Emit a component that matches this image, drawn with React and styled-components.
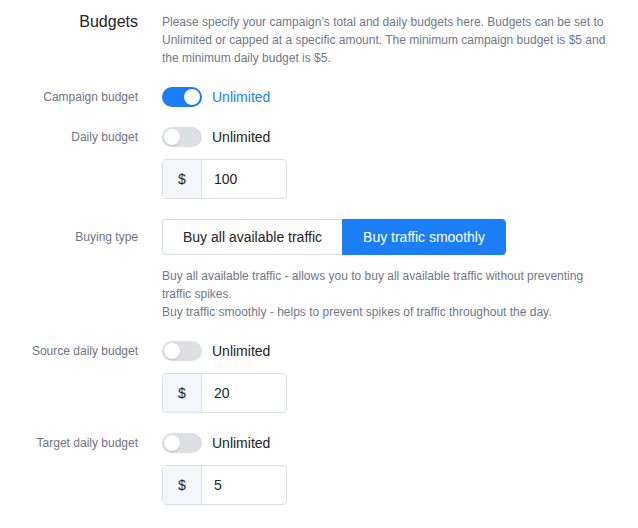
import React from "react";
import styled, { createGlobalStyle } from "styled-components";

const Global = createGlobalStyle`
  html, body { margin: 0; padding: 0; background: #ffffff; }
  body { font-family: "Liberation Sans", Arial, sans-serif; -webkit-font-smoothing: antialiased; }
  * { box-sizing: border-box; }
`;

const BLUE = "#1b7ef5";

const Form = styled.div`
  display: grid;
  grid-template-columns: 138px 1fr;
  column-gap: 24px;
  row-gap: 20px;
  padding: 13px 26px 0 0;
  width: 638px;
`;

const Title = styled.div`
  text-align: right;
  font-size: 16px;
  line-height: 18px;
  color: #222428;
`;

const Label = styled.div`
  text-align: right;
  font-size: 12px;
  color: #6b7489;
  line-height: ${(p) => p.$h || 20}px;
`;

const Description = styled.p`
  margin: 0;
  font-size: 12px;
  line-height: 18px;
  color: #6f778a;
`;

const Help = styled(Description)`
  margin-top: 12px;
`;

const Field = styled.div`
  display: flex;
  flex-direction: column;
  align-items: flex-start;
`;

const ToggleRow = styled.div`
  display: flex;
  align-items: center;
  gap: 10px;
  height: 20px;
`;

const Track = styled.div`
  width: 40px;
  height: 20px;
  border-radius: 10px;
  padding: 2px;
  display: flex;
  justify-content: ${(p) => (p.$on ? "flex-end" : "flex-start")};
  background: ${(p) => (p.$on ? BLUE : "#dcdfe4")};
`;

const Knob = styled.span`
  width: 16px;
  height: 16px;
  border-radius: 50%;
  background: #ffffff;
  box-shadow: 0 1px 2px rgba(0, 0, 0, 0.15);
`;

const ToggleText = styled.span`
  font-size: 14px;
  color: ${(p) => (p.$on ? BLUE : "#222428")};
`;

const InputGroup = styled.div`
  margin-top: 12px;
  display: flex;
  width: 125px;
  height: 40px;
  border: 1px solid #dcdfe5;
  border-radius: 4px;
  overflow: hidden;
`;

const Prefix = styled.div`
  width: 39px;
  display: flex;
  align-items: center;
  justify-content: center;
  background: #f4f6f9;
  border-right: 1px solid #dcdfe5;
  font-size: 14px;
  color: #222428;
`;

const Value = styled.div`
  flex: 1;
  display: flex;
  align-items: center;
  padding-left: 12px;
  font-size: 14px;
  color: #222428;
`;

const Segmented = styled.div`
  display: flex;
  height: 36px;
`;

const Segment = styled.div`
  display: flex;
  align-items: center;
  padding: 0 20px;
  font-size: 14px;
  color: ${(p) => (p.$active ? "#ffffff" : "#222428")};
  background: ${(p) => (p.$active ? BLUE : "#ffffff")};
  border: 1px solid ${(p) => (p.$active ? BLUE : "#d9dce2")};
  border-radius: ${(p) => (p.$first ? "4px 0 0 4px" : "0 4px 4px 0")};
  ${(p) => (p.$first ? "border-right: none;" : "")}
`;

function Toggle({ on }) {
  return (
    <ToggleRow>
      <Track $on={on}>
        <Knob />
      </Track>
      <ToggleText $on={on}>Unlimited</ToggleText>
    </ToggleRow>
  );
}

function Amount({ value }) {
  return (
    <InputGroup>
      <Prefix>$</Prefix>
      <Value>{value}</Value>
    </InputGroup>
  );
}

export default function App() {
  return (
    <>
      <Global />
      <Form>
        <Title>Budgets</Title>
        <Description>
          Please specify your campaign’s total and daily budgets here. Budgets can be set to
          Unlimited or capped at a specific amount. The minimum campaign budget is $5 and the
          minimum daily budget is $5.
        </Description>

        <Label>Campaign budget</Label>
        <Field>
          <Toggle on />
        </Field>

        <Label>Daily budget</Label>
        <Field>
          <Toggle />
          <Amount value="100" />
        </Field>

        <Label $h={36}>Buying type</Label>
        <Field>
          <Segmented>
            <Segment $first>Buy all available traffic</Segment>
            <Segment $active>Buy traffic smoothly</Segment>
          </Segmented>
          <Help>
            Buy all available traffic - allows you to buy all available traffic without preventing
            traffic spikes.
            <br />
            Buy traffic smoothly - helps to prevent spikes of traffic throughout the day.
          </Help>
        </Field>

        <Label>Source daily budget</Label>
        <Field>
          <Toggle />
          <Amount value="20" />
        </Field>

        <Label>Target daily budget</Label>
        <Field>
          <Toggle />
          <Amount value="5" />
        </Field>
      </Form>
    </>
  );
}
